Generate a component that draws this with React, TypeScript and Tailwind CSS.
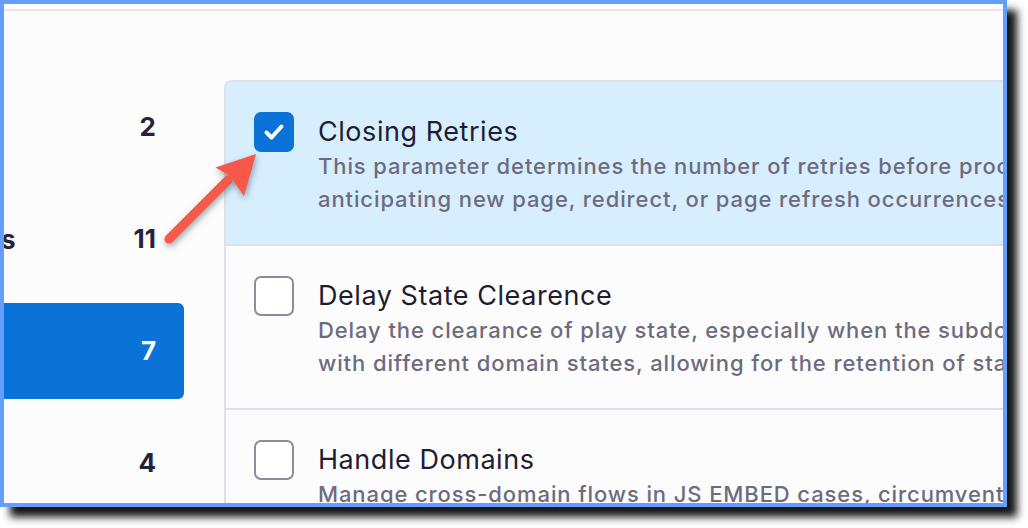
import React from "react";

const font = { fontFamily: "Inter, 'Noto Sans', sans-serif" };

const navItems = [
  { label: "", count: "2", active: false },
  { label: "Integrations", count: "11", active: false },
  { label: "", count: "7", active: true },
  { label: "", count: "4", active: false },
];

const options = [
  {
    title: "Closing Retries",
    lines: [
      "This parameter determines the number of retries before proceeding,",
      "anticipating new page, redirect, or page refresh occurrences.",
    ],
    checked: true,
  },
  {
    title: "Delay State Clearence",
    lines: [
      "Delay the clearance of play state, especially when the subdomains work",
      "with different domain states, allowing for the retention of state data.",
    ],
    checked: false,
  },
  {
    title: "Handle Domains",
    lines: [
      "Manage cross-domain flows in JS EMBED cases, circumventing limitations.",
      "",
    ],
    checked: false,
  },
];

function Checkbox({ checked }: { checked: boolean }) {
  if (checked) {
    return (
      <div className="w-[40px] h-[40px] shrink-0 rounded-[7px] bg-[#0b72d8] flex items-center justify-center">
        <svg width="40" height="40" viewBox="0 0 40 40" fill="none">
          <path d="M12.5 20.5 L17.5 25.5 L27.5 14.5" stroke="#fff" strokeWidth="4" strokeLinecap="round" strokeLinejoin="round" />
        </svg>
      </div>
    );
  }
  return <div className="w-[40px] h-[40px] shrink-0 rounded-[7px] border-2 border-[#8d8ba0] bg-white" />;
}

export default function App() {
  return (
    <div className="w-[1028px] h-[528px] bg-white relative" style={font}>
      <div className="relative w-[1007px] h-[507px] border-4 border-[#649fff] bg-[#fcfcfc] overflow-hidden shadow-[10px_10px_8px_rgba(0,0,0,0.92)]">
        <div className="h-[7px] bg-white border-b-2 border-[#e8e7f0]" />
        <div className="flex">
          {/* sidebar */}
          <div className="w-[180px] shrink-0 pt-[68px] flex flex-col gap-[16px]">
            {navItems.map((it) => (
              <div
                key={it.count}
                className={
                  "h-[96px] flex items-center justify-end overflow-hidden pr-[28px] rounded-r-[6px] " +
                  (it.active ? "bg-[#0b72d8] text-white" : "text-[#25233a]")
                }
              >
                {it.label && (
                  <span className="whitespace-nowrap text-[26px] font-bold mr-[118px]">{it.label}</span>
                )}
                <span className="w-[28px] text-right text-[26px] font-bold leading-none">{it.count}</span>
              </div>
            ))}
          </div>

          {/* options panel */}
          <div className="ml-[40px] pt-[69px] w-[900px] shrink-0">
            <div className="border-l-2 border-t-2 border-[#dfdeea] rounded-tl-[8px] overflow-hidden">
              {options.map((o, i) => (
                <div
                  key={o.title}
                  className={
                    "flex pl-[28px] pt-[30px] " +
                    (i > 0 ? "h-[164px] border-t-2 border-[#dfdeea] " : "h-[162px] ") +
                    (o.checked ? "bg-[#d7eefe]" : "bg-[#fcfcfc]")
                  }
                >
                  <Checkbox checked={o.checked} />
                  <div className="ml-[24px] mt-[2px] whitespace-nowrap">
                    <div className="text-[27px] leading-[36px] tracking-[0.55px] text-[#1f1d33]">{o.title}</div>
                    <div className="text-[22px] leading-[33px] tracking-[0.9px] text-[#6d6b80] font-medium">
                      {o.lines[0]}
                      <br />
                      {o.lines[1]}
                    </div>
                  </div>
                </div>
              ))}
            </div>
          </div>
        </div>

        {/* annotation arrow */}
        <svg
          className="absolute left-0 top-0 pointer-events-none"
          width="300"
          height="260"
          viewBox="0 0 300 260"
          style={{ filter: "drop-shadow(1px 3px 3px rgba(0,0,0,0.35))" }}
        >
          <line x1="165" y1="235" x2="224" y2="176" stroke="#f7584a" strokeWidth="9" strokeLinecap="round" />
          <path d="M252 150 L211.5 163.5 L226 172 L240 192 Z" fill="#f7584a" />
        </svg>
      </div>
    </div>
  );
}
